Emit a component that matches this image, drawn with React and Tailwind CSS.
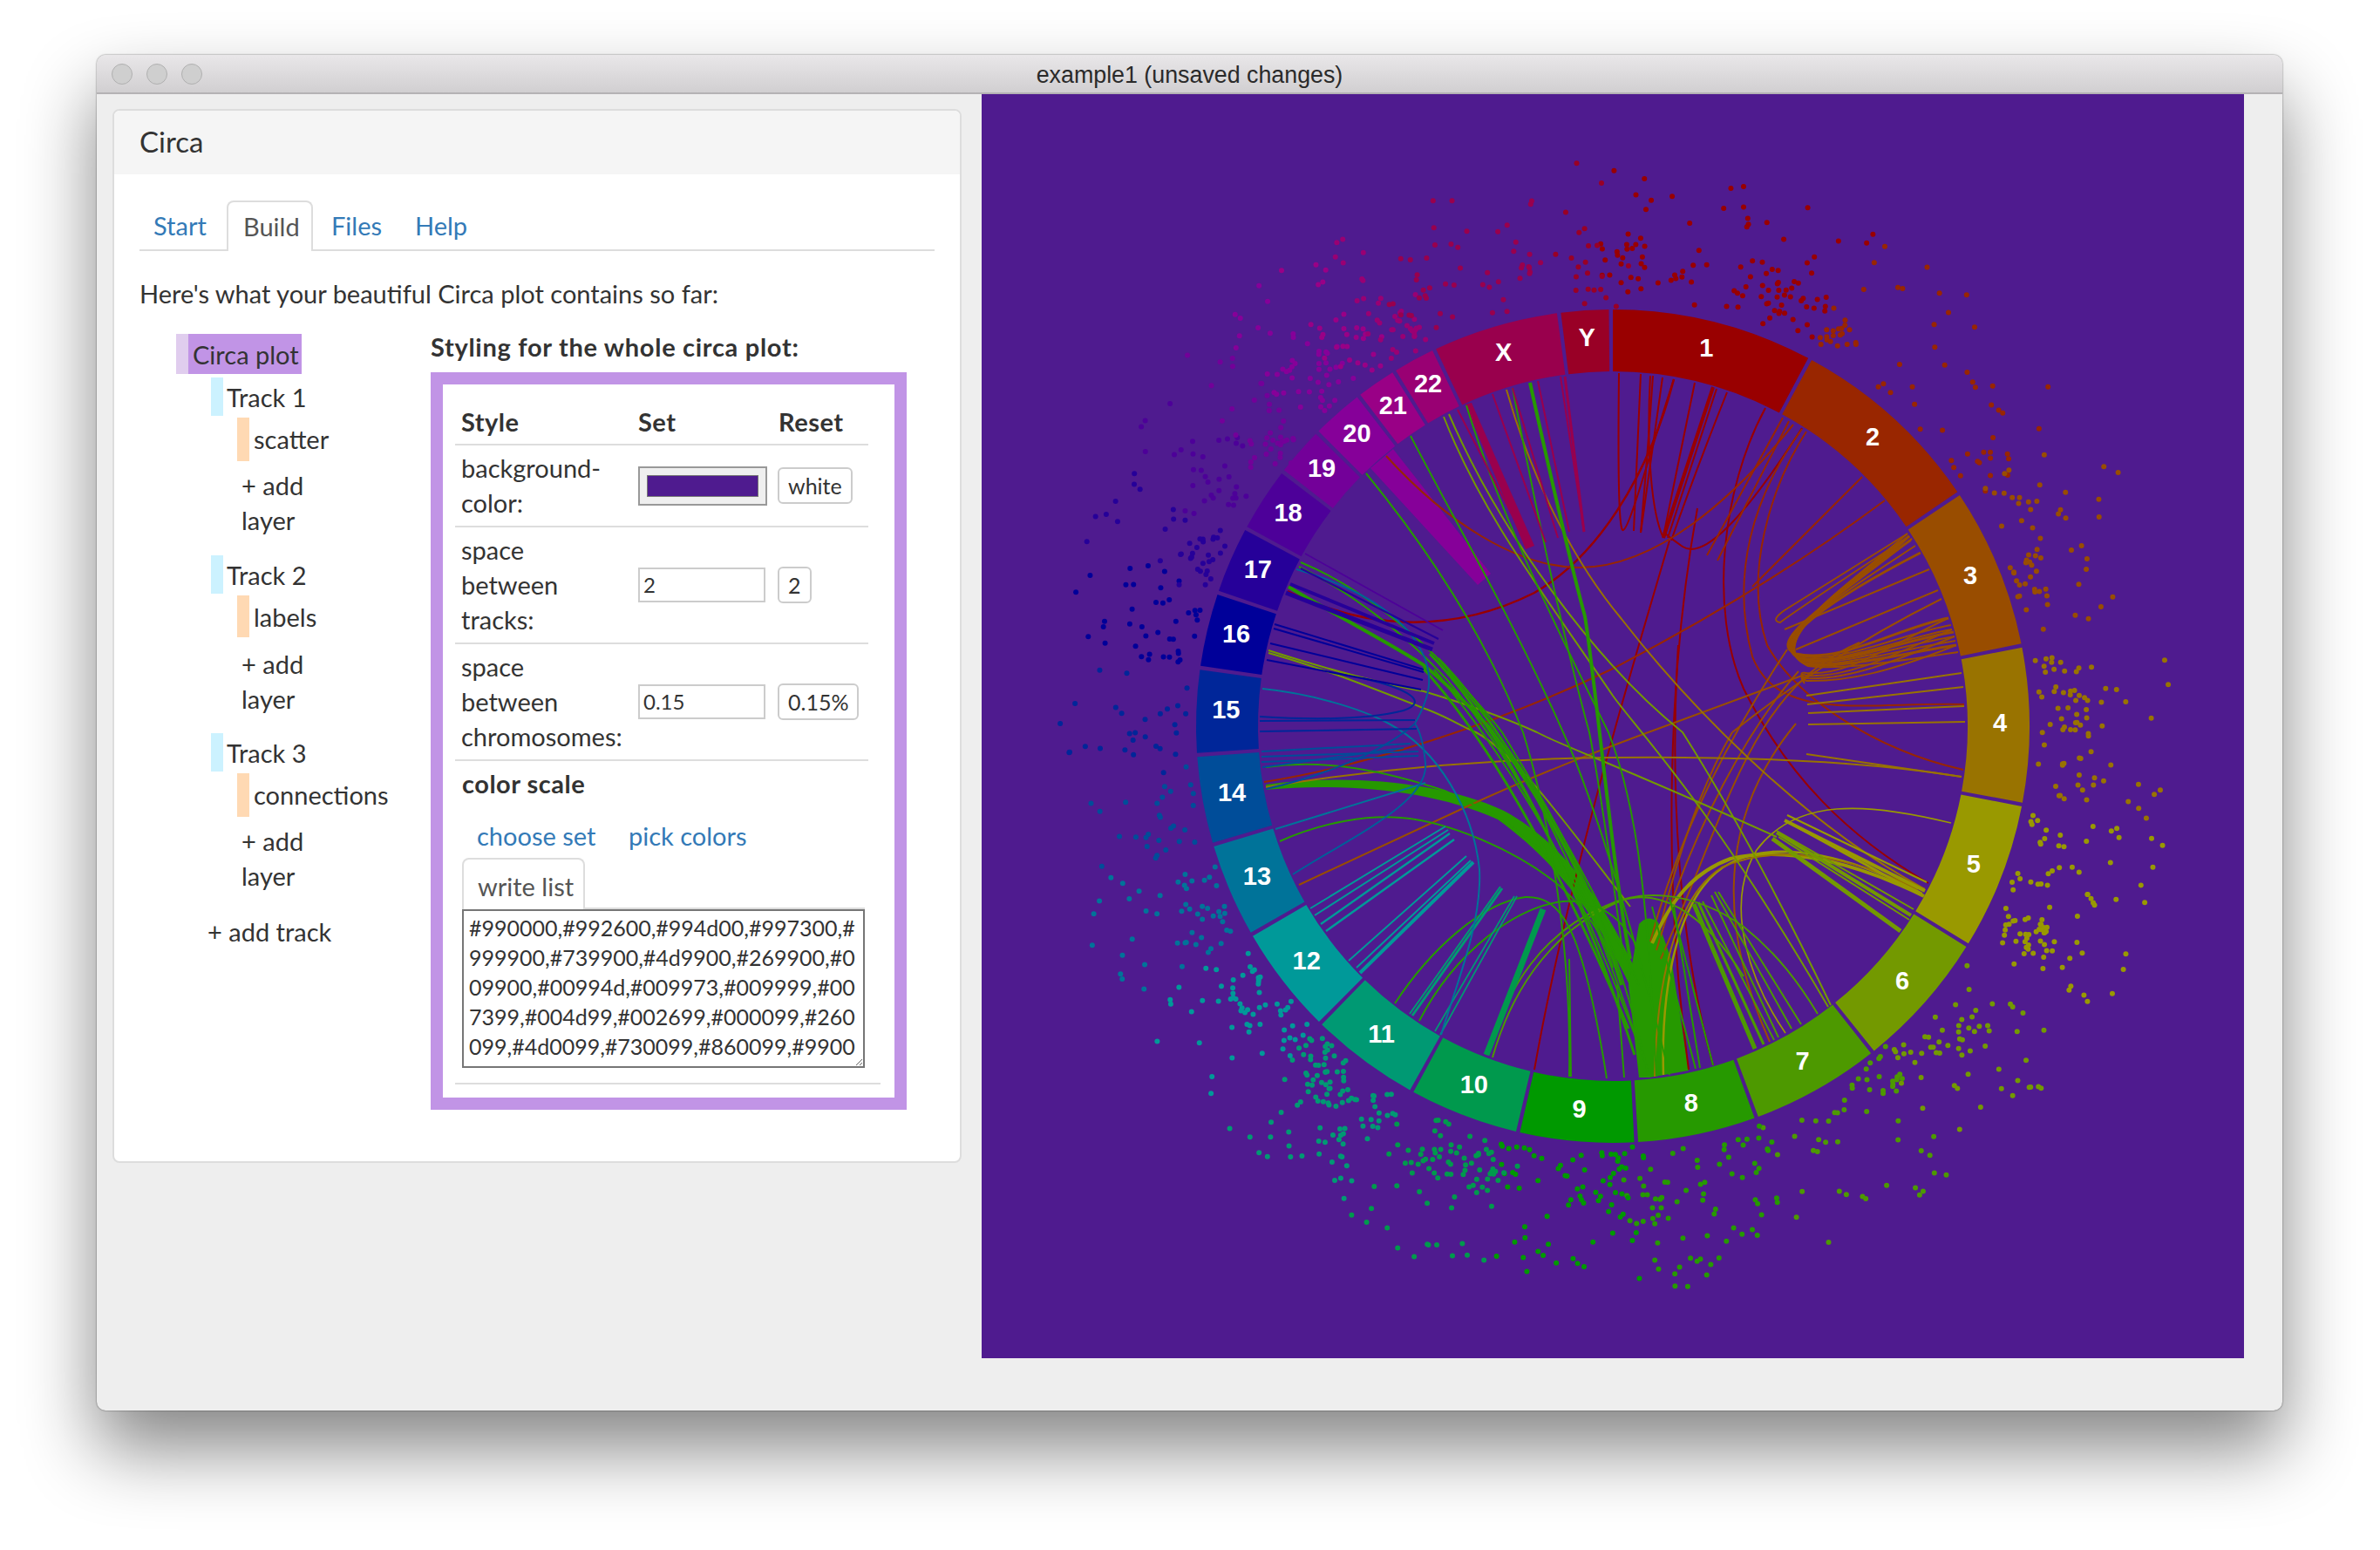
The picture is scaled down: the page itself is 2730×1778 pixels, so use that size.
import React from 'react';

// chromosome sizes (Mb) and colours, in ring order
const CHROMS = [
  ['1', 249, '#990000'], ['2', 243, '#992600'], ['3', 198, '#994d00'], ['4', 191, '#997300'],
  ['5', 181, '#999900'], ['6', 171, '#739900'], ['7', 159, '#4d9900'], ['8', 146, '#269900'],
  ['9', 141, '#009900'], ['10', 135, '#00994d'], ['11', 135, '#009973'], ['12', 133, '#009999'],
  ['13', 115, '#007399'], ['14', 107, '#004d99'], ['15', 102, '#002699'], ['16', 90, '#000099'],
  ['17', 81, '#260099'], ['18', 78, '#4d0099'], ['19', 59, '#730099'], ['20', 63, '#860099'],
  ['21', 48, '#990086'], ['22', 51, '#990073'], ['X', 155, '#99004d'], ['Y', 59, '#990026'],
];
const DOT_COUNTS = [105, 65, 60, 75, 95, 60, 55, 75, 75, 85, 105, 60, 50, 28, 28, 40, 40, 35, 40, 50, 30, 40, 50, 22];

const CX = 1850;
const CY = 833;
const R_OUT = 478;
const R_IN = 407;
const GAP = 0.54;
const DEG = (360 - GAP * CHROMS.length) / 3090;

const polar = (deg, r) => {
  const a = ((deg - 90) * Math.PI) / 180;
  return [CX + r * Math.cos(a), CY + r * Math.sin(a)];
};

const segments = [];
{
  let at = 0;
  CHROMS.forEach(([name, size, color]) => {
    const end = at + size * DEG;
    segments.push({ name, color, start: at, end });
    at = end + GAP;
  });
}

const segPath = ({ start, end }) => {
  const [x1, y1] = polar(start, R_OUT);
  const [x2, y2] = polar(end, R_OUT);
  const [x3, y3] = polar(end, R_IN);
  const [x4, y4] = polar(start, R_IN);
  return `M${x1},${y1} A${R_OUT},${R_OUT} 0 0 1 ${x2},${y2} L${x3},${y3} A${R_IN},${R_IN} 0 0 0 ${x4},${y4} Z`;
};

// small seeded generator so the scatter stays put between runs
let seed = 4711;
const rnd = () => {
  seed = (seed * 16807) % 2147483647;
  return seed / 2147483647;
};

const dots = [];
segments.forEach((s, i) => {
  const clusters = [0, 1, 2].map(() => ({ a: s.start + rnd() * (s.end - s.start), r: 500 + rnd() * 50 }));
  for (let k = 0; k < DOT_COUNTS[i]; k++) {
    let a;
    let r;
    if (rnd() < 0.4) {
      const c = clusters[Math.floor(rnd() * 3)];
      a = c.a + (rnd() - 0.5) * 6;
      r = c.r + (rnd() - 0.5) * 50;
    } else {
      a = s.start + rnd() * (s.end - s.start);
      r = 490 + Math.pow(rnd(), 1.4) * 160;
    }
    const [x, y] = polar(a, r);
    dots.push({ x, y, color: s.color });
  }
});

const RED = '#990000';
const RUST = '#992600';
const ORANGE = '#994d00';
const AMBER = '#997300';
const GOLD = '#999900';
const OLIVE = '#739900';
const LIME = '#4d9900';
const GREEN = '#269900';
const TEAL = '#009999';
const CRIM = '#99004d';

// connections, read off the reference: [colour, width, path]
const links = [
  // chr 1
  [RED, 2, 'M1857,428 C1856,520 1856,612 1862,608 C1870,605 1895,510 1920,435'],
  [RED, 2, 'M1882,429 Q1878,520 1874,609'],
  [RED, 2, 'M1896,431 Q1890,520 1882,611'],
  [RED, 2, 'M1907,433 Q1895,520 1882,611'],
  [RED, 2, 'M1893,431 C1888,520 1895,590 1908,617'],
  [RED, 2, 'M1944,439 Q1925,530 1908,615'],
  [RED, 4, 'M1965,444 L1908,617'],
  [RED, 2, 'M1969,446 L1913,617'],
  [RED, 2, 'M1981,450 Q1945,540 1917,620'],
  [RED, 2, 'M2025,468 C1975,560 1960,700 2000,790 C2050,890 2120,960 2212,1013'],
  [RED, 2, 'M2067,491 Q1965,650 1930,627 Q1913,615 1908,610'],
  [RED, 2.5, 'M1920,435 C1890,550 1830,640 1760,680 C1660,730 1560,720 1477,678'],
  [RED, 2, 'M1915,620 C1880,740 1800,1000 1760,1227'],
  [RED, 2, 'M1947,583 C1915,760 1905,1000 1937,1227'],
  [RED, 2, 'M1925,740 C1915,900 1925,1080 1965,1222'],
  // chr 2
  [RUST, 2, 'M2045,479 L1958,637'],
  [RUST, 2, 'M2052,483 L1970,643'],
  [RUST, 2, 'M2067,492 C2010,570 1985,660 2010,753 C2040,830 2140,805 2253,808'],
  [RUST, 2, 'M2072,495 C2030,560 2000,660 2027,740 C2060,800 2150,860 2252,883'],
  [RUST, 2, 'M2136,547 L2010,673'],
  [RUST, 2, 'M2162,574 C2060,650 1960,710 1850,767 C1720,830 1560,880 1450,897'],
  [RUST, 2, 'M1590,523 C1660,600 1740,650 1810,651 C1900,652 1990,570 2057,487'],
  // chr 3
  [ORANGE, 2, 'M1490,1015 L1683,925 Q1780,880 1918,830 Q2000,800 2067,775'],
  [ORANGE, 2, 'M2213,653 L2047,722'],
  [ORANGE, 2, 'M2223,677 L2060,745'],
  [ORANGE, 2, 'M2227,687 Q2100,750 1987,840'],
  [ORANGE, 2, 'M2188,612 L2047,700 Q2030,712 2042,714 Q2060,700 2190,615'],
  [ORANGE, 2, 'M2050,745 C2000,820 1930,940 1893,1080'],
  [ORANGE, 2, 'M2063,770 C2010,830 1940,950 1900,1090'],
  [ORANGE, 2, 'M2133,737 C2010,790 1985,920 1905,1100'],
  [ORANGE, 2, 'M2060,830 C1985,920 1960,1040 2030,1195'],
  [ORANGE, 2, 'M1987,840 Q1940,920 1905,1060'],
  // chr 4
  [AMBER, 2, 'M2250,772 L2072,798'],
  [AMBER, 2, 'M2252,788 L2073,808'],
  [AMBER, 2, 'M2253,810 L2074,818'],
  [AMBER, 2, 'M2254,828 L2074,831'],
  [AMBER, 2, 'M2072,865 L2250,891'],
  [AMBER, 2, 'M2250,891 C2120,870 1950,868 1850,869 C1700,870 1560,885 1452,903'],
  [AMBER, 2, 'M1728,447 C1760,560 1810,650 1860,710 C1930,800 2060,940 2208,1020'],
  // chr 5
  [GOLD, 1.7, 'M2238,944 C2140,920 2060,915 2015,975 C1975,1040 2010,1130 2048,1185'],
  [GOLD, 4, 'M2207,1028 C2130,990 2050,970 1985,985 C1930,1005 1910,1050 1895,1082'],
  [GOLD, 2.5, 'M2205,1025 C2130,985 2040,960 1985,990 C1925,1020 1905,1130 1908,1233'],
  [AMBER, 2, 'M2200,1020 C2130,985 2040,965 1975,995 C1920,1030 1900,1130 1898,1235'],
  [GOLD, 2, 'M2050,935 L2210,1012'],
  [GOLD, 4, 'M2047,941 L2208,1022'],
  [GOLD, 3, 'M2053,944 L2206,1028'],
  // chr 6
  [OLIVE, 2, 'M2038,953 L2195,1043'],
  [OLIVE, 4, 'M2038,955 L2192,1050'],
  [OLIVE, 2, 'M2040,960 L2190,1055'],
  [OLIVE, 5, 'M2033,962 L2180,1068'],
  [OLIVE, 2, 'M1662,475 C1720,610 1830,760 1930,840 C2000,950 2060,1070 2100,1153'],
  [OLIVE, 2, 'M1656,478 C1700,590 1770,680 1850,798 C1880,840 1960,920 2097,1155'],
  [OLIVE, 2, 'M1455,746 C1530,770 1590,785 1633,793 C1690,810 1730,825 1763,840 C1790,855 1850,875 2038,960'],
  [OLIVE, 2, 'M1455,749 C1530,770 1600,800 1640,815 C1665,825 1680,835 1693,840 C1740,865 1800,950 1870,1040'],
  // chr 7
  [LIME, 5, 'M1943,1037 L2013,1203'],
  [LIME, 3, 'M1948,1035 L2023,1198'],
  [LIME, 2, 'M1953,1034 L2035,1193'],
  [LIME, 2, 'M1963,1027 L2040,1190'],
  [LIME, 2, 'M1967,1023 L2055,1180'],
  [LIME, 2, 'M1971,1023 L2066,1175'],
  [LIME, 2, 'M1840,1040 C1880,1020 1940,1020 2000,1063 C2040,1095 2065,1130 2085,1163'],
  [LIME, 2, 'M1712,1213 C1730,1150 1770,1070 1860,1033 C1900,1020 1950,1040 2000,1120'],
  [LIME, 2, 'M1705,1210 C1730,1130 1770,1070 1840,1040'],
  // chr 8 and the long greens
  [GREEN, 2, 'M1682,465 C1720,590 1790,730 1845,840 C1880,930 1890,1040 1900,1235'],
  [GREEN, 4, 'M1755,439 C1775,530 1800,640 1818,707 C1830,780 1850,1000 1870,1100'],
  [GREEN, 2, 'M1735,445 C1755,550 1790,720 1823,840 C1835,900 1855,1040 1862,1100'],
  [GREEN, 2, 'M1618,500 C1670,600 1740,720 1793,840 C1830,920 1880,1090 1915,1233'],
  [GREEN, 2, 'M1567,543 C1630,620 1700,720 1747,840 C1775,930 1803,1080 1800,1235'],
  [GREEN, 2, 'M1492,645 C1540,665 1590,697 1647,753 C1680,790 1700,810 1723,840 C1790,950 1850,1050 1890,1230'],
  [GREEN, 2, 'M1490,650 C1550,680 1610,725 1660,780 C1720,850 1790,960 1880,1200'],
  [GREEN, 4, 'M1478,673 C1530,705 1590,735 1633,763 C1660,785 1690,815 1707,833 C1780,930 1830,1030 1860,1130'],
  [GREEN, 3, 'M1640,750 C1700,810 1790,950 1875,1210'],
  [GREEN, 2, 'M1650,755 C1710,815 1800,950 1885,1215'],
  [GREEN, 3, 'M1632,766 C1690,830 1770,950 1868,1180'],
  [GREEN, 2, 'M1660,770 C1725,840 1800,960 1880,1130'],
  [GREEN, 2, 'M1645,768 C1700,835 1765,925 1850,1100'],
  [GREEN, 2, 'M1452,880 C1523,870 1590,885 1657,907 C1710,930 1760,960 1790,1000'],
  [GREEN, 2, 'M1468,965 C1520,942 1570,935 1607,938 C1660,942 1740,975 1790,1017 C1815,1040 1840,1070 1850,1110'],
  [GREEN, 2, 'M1600,1151 C1640,1090 1700,1035 1750,1029 C1790,1028 1815,1060 1843,1237'],
  [GREEN, 2, 'M1628,1171 C1670,1090 1740,1040 1793,1034 C1830,1032 1860,1050 1880,1090'],
  [GREEN, 2, 'M1800,1100 L1802,1235'],
  [GREEN, 2, 'M1855,1130 L1863,1236'],
  [GREEN, 2, 'M1920,1040 L1950,1225'],
  [GREEN, 2, 'M1895,1040 L1945,1226'],
  [GREEN, 2, 'M1915,1030 L1965,1222'],
  // chr 10 - 14
  [TEAL, 2, 'M1658,948 L1503,1042'],
  [TEAL, 2, 'M1661,952 L1508,1050'],
  [TEAL, 2.5, 'M1663,956 L1515,1060'],
  [TEAL, 2.5, 'M1668,963 L1521,1068'],
  [TEAL, 2, 'M1682,982 L1547,1102'],
  [TEAL, 2, 'M1687,987 L1556,1110'],
  [TEAL, 4, 'M1690,989 L1560,1116'],
  ['#009973', 2, 'M1721,1017 L1617,1163'],
  ['#009973', 3, 'M1723,1019 L1620,1165'],
  ['#009973', 1.7, 'M1737,1028 L1646,1183'],
  ['#009973', 1.7, 'M1740,1028 L1652,1187'],
  ['#00994d', 7, 'M1770,1043 L1705,1210'],
  ['#007399', 2, 'M1448,790 C1500,795 1560,812 1593,830 C1650,860 1690,930 1697,997 C1700,1060 1670,1130 1653,1187'],
  ['#007399', 2, 'M1463,951 L1635,898'],
  ['#005f99', 2, 'M1483,1003 C1550,960 1640,920 1635,875 C1633,855 1630,840 1623,830 C1640,800 1650,770 1620,730 C1590,690 1530,665 1487,653'],
  ['#004d99', 2, 'M1447,862 L1618,853'],
  ['#004d99', 2, 'M1447,868 L1627,862'],
  ['#004d99', 2, 'M1447,874 L1627,867'],
  ['#004d99', 2, 'M1448,880 L1610,858'],
  ['#004d99', 2, 'M1452,905 C1520,890 1590,860 1623,830'],
  ['#002699', 2, 'M1445,822 C1510,826 1570,825 1610,815 C1640,805 1615,790 1563,778'],
  ['#002699', 2, 'M1445,827 L1623,826'],
  ['#002699', 2, 'M1445,839 L1625,836'],
  // chr 16 - 22, X, Y
  ['#000099', 2, 'M1462,716 L1633,768'],
  ['#000099', 2, 'M1461,721 L1633,771'],
  ['#000099', 2, 'M1457,738 L1632,780'],
  ['#000099', 2, 'M1453,757 L1630,791'],
  ['#260099', 2, 'M1492,652 L1650,733'],
  ['#260099', 4, 'M1480,670 L1645,738'],
  ['#260099', 5, 'M1475,680 L1643,745'],
  ['#4d0099', 1.7, 'M1497,635 L1655,723'],
  [CRIM, 2, 'M1790,432 L1817,610'],
  [CRIM, 3, 'M1795,432 L1817,610'],
  [CRIM, 2, 'M1764,437 L1800,610'],
  [CRIM, 2, 'M1735,445 L1787,617'],
  [CRIM, 2, 'M1712,452 L1773,622'],
  [CRIM, 2, 'M1672,470 L1748,617'],
];

// tapered ribbons that a plain stroke can't give
const ribbons = [
  ['#860099', 'M1598,515 L1710,658 L1695,671 L1572,537 Z'],
  [CRIM, 'M1681,464 L1688,462 L1760,626 L1750,630 Z'],
  [GREEN, 'M1452,900 C1540,888 1650,895 1725,930 C1790,965 1840,1030 1884,1130 L1872,1136 C1830,1045 1780,985 1718,940 C1640,905 1540,898 1452,906 Z'],
  [GREEN, 'M1880,1060 Q1890,1048 1902,1058 L1917,1100 L1937,1228 L1892,1236 L1880,1236 L1868,1130 Z'],
];

const ORANGE_STARTS = [[2190, 615], [2193, 618], [2197, 626], [2203, 634], [2188, 612], [2192, 620]];
const ORANGE_ENDS = [[2235, 709], [2238, 717], [2239, 722], [2241, 725], [2242, 730], [2243, 735], [2244, 740], [2246, 748]];

function CircaPlot() {
  return (
    <svg viewBox="1126 108 1448 1450" className="block w-[1448px] h-[1450px] shrink-0 bg-[#4f1b8f]">
      {dots.map((d, i) => (
        <circle key={i} cx={d.x} cy={d.y} r="3" fill={d.color} />
      ))}
      {segments.map((s) => (
        <path key={s.name} d={segPath(s)} fill={s.color} />
      ))}
      <g fill="none" strokeLinecap="butt">
        {ribbons.map(([c, d], i) => (
          <path key={i} d={d} fill={c} />
        ))}
        {links.map(([c, w, d], i) => (
          <path key={i} d={d} stroke={c} strokeWidth={w} />
        ))}
        {/* hairpin bundle between the two ends of chr 3 */}
        {ORANGE_ENDS.map(([x, y], i) => {
          const [sx, sy] = ORANGE_STARTS[i % ORANGE_STARTS.length];
          return (
            <path
              key={i}
              d={`M${sx},${sy} C${2120 - i * 4},${680 + i} ${2020 + i},${735 + i} ${2060 + i * 2},${750 + i * 2} C${2110},${762 + i} ${2180},${y + 10} ${x},${y}`}
              stroke={ORANGE}
              strokeWidth={i % 3 === 0 ? 3 : 2}
            />
          );
        })}
        {ORANGE_ENDS.filter((_, i) => i % 2 === 0).map(([x, y], i) => (
          <path
            key={i}
            d={`M${x},${y} C${2170},${y + 30} ${2120},${776 + i * 2} ${2072},${772 + i * 3} Q${2062},${770 + i} ${2070},${778 + i * 2}`}
            stroke={ORANGE}
            strokeWidth="2"
          />
        ))}
      </g>
      {segments.map((s) => {
        const [x, y] = polar((s.start + s.end) / 2, 444);
        return (
          <text
            key={s.name}
            x={x}
            y={y - 3}
            fill="#fff"
            fontSize="29"
            fontWeight="700"
            fontFamily="'Liberation Sans', Arial, sans-serif"
            textAnchor="middle"
            dominantBaseline="central"
          >
            {s.name}
          </text>
        );
      })}
    </svg>
  );
}

const tracks = [
  { name: 'Track 1', mt: 'mt-[4px]', layer: 'scatter', layerH: 'h-[50px]', addMt: 'mt-[8px]' },
  { name: 'Track 2', mt: 'mt-[20px]', layer: 'labels', layerH: 'h-[48px]', addMt: 'mt-[11px]' },
  { name: 'Track 3', mt: 'mt-[19px]', layer: 'connections', layerH: 'h-[50px]', addMt: 'mt-[8px]' },
];

function Tree() {
  return (
    <div className="w-[334px] pt-[5px] shrink-0">
      <div className="ml-[42px] flex w-[144px] h-[46px] bg-[#c194e6]">
        <div className="w-[14px] bg-[#e0cdee]" />
        <span className="pl-[5px] leading-[48px]">Circa plot</span>
      </div>
      {tracks.map((t) => (
        <div key={t.name}>
          <div className={`${t.mt} ml-[82px] flex h-[44px]`}>
            <div className="w-[14px] bg-[#ccf2ff]" />
            <span className="pl-[4px] leading-[46px]">{t.name}</span>
          </div>
          <div className={`mt-[2px] ml-[112px] flex ${t.layerH}`}>
            <div className="w-[14px] bg-[#ffd9b3]" />
            <span className="pl-[5px] leading-[50px]">{t.layer}</span>
          </div>
          <div className={`${t.addMt} ml-[117px] w-[90px]`}>+ add layer</div>
        </div>
      ))}
      <div className="mt-[24px] ml-[78px]">+ add track</div>
    </div>
  );
}

function ResetButton({ children }) {
  return (
    <button className="h-[42px] px-[10px] border-2 border-[#ccc] rounded-[6px] bg-white text-[25px] leading-none text-[#333]">
      {children}
    </button>
  );
}

const COLORS =
  '#990000,#992600,#994d00,#997300,#999900,#739900,#4d9900,#269900,#009900,#00994d,#009973,#009999,#007399,#004d99,#002699,#000099,#260099,#4d0099,#730099,#860099,#990086,#990073,#99004d,#990026';

function StylePanel() {
  return (
    <div className="w-[546px] shrink-0">
      <div className="h-[40px] mb-[9px] font-bold tracking-[0.7px]">Styling for the whole circa plot:</div>
      <div className="h-[846px] border-14 border-[#c194e6] pt-[14px] pl-[14px]">
        <table className="w-[474px] table-fixed border-collapse text-left">
          <colgroup>
            <col className="w-[200px]" />
            <col className="w-[161px]" />
            <col className="w-[113px]" />
          </colgroup>
          <thead>
            <tr className="border-b-2 border-[#ddd] tracking-[0.5px]">
              <th className="pl-[7px] pt-[9px] pb-[5px]">Style</th>
              <th className="pl-[10px] pt-[9px] pb-[5px]">Set</th>
              <th className="pl-[10px] pt-[9px] pb-[5px]">Reset</th>
            </tr>
          </thead>
          <tbody>
            <tr className="border-b-2 border-[#ddd]">
              <td className="pl-[7px] pr-[6px] py-[6px]">background-color:</td>
              <td className="pl-[10px] py-[6px]">
                <div className="w-[148px] h-[45px] p-[8px] border-2 border-[#999] bg-[#efefef]">
                  <div className="h-full bg-[#4f1b8f] border border-[#777]" />
                </div>
              </td>
              <td className="pl-[9px] py-[6px]">
                <ResetButton>white</ResetButton>
              </td>
            </tr>
            <tr className="border-b-2 border-[#ddd]">
              <td className="pl-[7px] pr-[6px] py-[6px]">space between tracks:</td>
              <td className="pl-[10px] py-[6px]">
                <input readOnly value="2" className="block w-[146px] h-[40px] px-[4px] border-2 border-[#ccc] text-[24px] text-[#333]" />
              </td>
              <td className="pl-[9px] py-[6px]">
                <ResetButton>2</ResetButton>
              </td>
            </tr>
            <tr className="border-b-2 border-[#ddd]">
              <td className="pl-[7px] pr-[6px] py-[6px]">space between chromosomes:</td>
              <td className="pl-[10px] py-[6px]">
                <input readOnly value="0.15" className="block w-[146px] h-[40px] px-[4px] border-2 border-[#ccc] text-[24px] text-[#333]" />
              </td>
              <td className="pl-[9px] py-[6px]">
                <ResetButton>0.15%</ResetButton>
              </td>
            </tr>
          </tbody>
        </table>
        <div className="pl-[8px]">
          <div className="mt-[6px] h-[40px] leading-[40px] font-bold tracking-[0.5px]">color scale</div>
          <div className="mt-[20px] h-[40px] flex text-[#337ab7]">
            <span className="w-[191px] pl-[17px]">choose set</span>
            <span>pick colors</span>
          </div>
          <div className="mt-[5px] w-[462px] h-[59px] border-b-2 border-[#ddd]">
            <div className="w-[141px] h-[59px] pl-[16px] pt-[11px] leading-[40px] border-2 border-b-0 border-[#ddd] rounded-t-[8px] bg-white text-[#555]">
              write list
            </div>
          </div>
          <textarea
            readOnly
            value={COLORS}
            className="block w-[462px] h-[182px] mt-0 px-[6px] py-[2px] border-2 border-[#767676] overflow-hidden break-all text-[25px] leading-[34px] text-[#333] outline-none"
          />
        </div>
        <div className="mt-[17px] w-[488px] border-t-2 border-[#ddd]" />
      </div>
    </div>
  );
}

export default function App() {
  return (
    <div className="w-[2730px] h-[1778px] overflow-hidden bg-white pt-[63px] pl-[111px] font-[Lato,sans-serif] text-[29px] leading-[40px] text-[#333]">
      <div className="w-[2507px] h-[1555px] rounded-[10px] bg-[#eee] shadow-[0_44px_84px_rgba(0,0,0,0.48),0_0_2px_rgba(0,0,0,0.6)]">
        <div className="h-[45px] pt-[3px] flex items-center rounded-t-[10px] border-b-2 border-[#b4b2b4] bg-gradient-to-b from-[#e9e7e9] to-[#d1cfd1]">
          <div className="flex gap-[16px] pl-[17px] -mt-[3px] w-[200px]">
            <div className="w-[24px] h-[24px] rounded-full bg-[#cfcfcf] border border-[#b0b0b0]" />
            <div className="w-[24px] h-[24px] rounded-full bg-[#cfcfcf] border border-[#b0b0b0]" />
            <div className="w-[24px] h-[24px] rounded-full bg-[#cfcfcf] border border-[#b0b0b0]" />
          </div>
          <div className="flex-1 text-center font-['Liberation_Sans',sans-serif] text-[26.8px] text-[#2a2a2a]">
            example1 (unsaved changes)
          </div>
          <div className="w-[200px]" />
        </div>
        <div className="flex items-start">
          <div className="mt-[17px] ml-[18px] mr-[23px] w-[974px] h-[1209px] shrink-0 rounded-[8px] border-2 border-[#ddd] bg-white overflow-hidden">
            <div className="h-[73px] pl-[29px] pb-[3px] flex items-center bg-[#f5f5f5] text-[33px]">Circa</div>
            <div className="pl-[29px] pr-[29px]">
              <div className="mt-[30px] h-[58px] flex items-end border-b-2 border-[#ddd] text-[#337ab7]">
                <span className="w-[100px] h-[56px] pl-[16px] leading-[58px]">Start</span>
                <span className="w-[99px] h-[58px] -mb-[2px] pl-[17px] pt-[2px] leading-[52px] border-2 border-b-0 border-[#ddd] rounded-t-[8px] bg-white text-[#555]">
                  Build
                </span>
                <span className="w-[96px] h-[56px] pl-[21px] leading-[58px]">Files</span>
                <span className="h-[56px] pl-[21px] leading-[58px]">Help</span>
              </div>
              <p className="mt-[29px]">Here's what your beautiful Circa plot contains so far:</p>
              <div className="mt-[21px] flex">
                <Tree />
                <StylePanel />
              </div>
            </div>
          </div>
          <CircaPlot />
        </div>
      </div>
    </div>
  );
}
